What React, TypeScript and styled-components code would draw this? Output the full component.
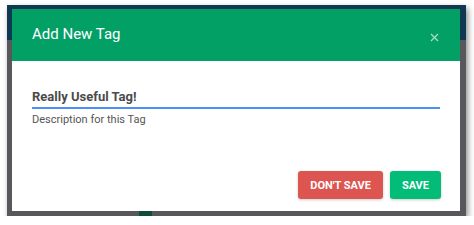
import { FC } from 'react';
import styled, { createGlobalStyle } from 'styled-components';

const GlobalStyle = createGlobalStyle`
  html, body {
    margin: 0;
    padding: 0;
    background: #ffffff;
    font-family: Roboto, "Liberation Sans", Arial, sans-serif;
  }
`;

const Backdrop = styled.div`
  box-sizing: border-box;
  margin: 5px 0 0 7px;
  width: 459px;
  height: 211px;
  padding: 4px 6px 5px 5px;
  background: linear-gradient(#0f3853 0 35px, #56585b 35px);
  box-shadow: 2px 3px 6px rgba(0, 0, 0, 0.45);
  position: relative;
`;

const Peek = styled.div`
  position: absolute;
  left: 132px;
  bottom: 0;
  width: 13px;
  height: 5px;
  background: #0f4a3a;
`;

const Modal = styled.div`
  position: relative;
  z-index: 1;
  width: 448px;
  height: 202px;
  background: #ffffff;
  display: flex;
  flex-direction: column;
`;

const Header = styled.div`
  height: 52px;
  background: #03a066;
  display: flex;
  align-items: center;
  justify-content: space-between;
  padding: 0 20px 0 20px;
`;

const Title = styled.h3`
  margin: 0 0 2px;
  font-size: 15px;
  font-weight: 400;
  color: #ffffff;
`;

const Close = styled.button`
  border: 0;
  background: none;
  padding: 0;
  margin-top: 4px;
  width: 12px;
  height: 12px;
  display: flex;
  align-items: center;
  justify-content: center;
  cursor: pointer;
`;

const Body = styled.div`
  flex: 1;
  padding: 28px 20px 0;
  display: flex;
  flex-direction: column;
`;

const NameInput = styled.input`
  border: 0;
  border-bottom: 2px solid #4d8ef7;
  padding: 0 0 3px;
  outline: none;
  font-family: inherit;
  font-size: 13px;
  font-weight: 700;
  color: #4a4a4a;
  width: 100%;
  box-sizing: border-box;
`;

const Hint = styled.div`
  margin-top: 4px;
  font-size: 11px;
  color: #555;
`;

const Footer = styled.div`
  display: flex;
  justify-content: flex-end;
  gap: 7px;
  padding: 0 19px 12px;
`;

const Button = styled.button<{ $tone: 'danger' | 'success' }>`
  height: 28px;
  padding: 0 12px;
  border: 0;
  border-radius: 3px;
  background: ${p => (p.$tone === 'danger' ? '#dc5550' : '#02bc77')};
  color: #fff;
  font-family: inherit;
  font-size: 11px;
  font-weight: 700;
  text-transform: uppercase;
  box-shadow: 0 1px 3px rgba(0, 0, 0, 0.2);
  cursor: pointer;
`;

const App: FC = () => (
  <>
    <GlobalStyle />
    <Backdrop>
      <Modal>
        <Header>
          <Title>Add New Tag</Title>
          <Close aria-label="Close">
            <svg width="9" height="9" viewBox="0 0 9 9">
              <path d="M1 1L8 8M8 1L1 8" stroke="#a8dcc3" strokeWidth="1.3" />
            </svg>
          </Close>
        </Header>
        <Body>
          <NameInput defaultValue="Really Useful Tag!" />
          <Hint>Description for this Tag</Hint>
        </Body>
        <Footer>
          <Button $tone="danger">Don't Save</Button>
          <Button $tone="success">Save</Button>
        </Footer>
      </Modal>
      <Peek />
    </Backdrop>
  </>
);

export default App;
